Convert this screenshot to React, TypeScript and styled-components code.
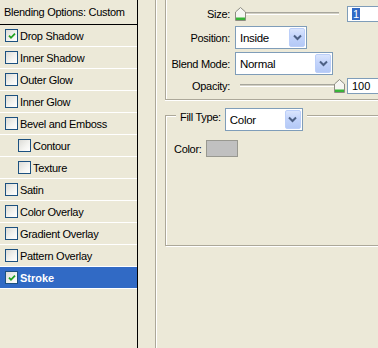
import React from "react";
import styled, { createGlobalStyle } from "styled-components";

const GlobalStyle = createGlobalStyle`
  html, body {
    margin: 0;
    padding: 0;
    overflow: hidden;
    background: #ece9d8;
  }
  body {
    font-family: "Liberation Sans", Arial, sans-serif;
    font-size: 11px;
    color: #000;
  }
`;

const Window = styled.div`
  display: flex;
  width: 378px;
  height: 348px;
  overflow: hidden;
  background: #ece9d8;
  letter-spacing: -0.3px;
`;

const StyleList = styled.div`
  width: 137px;
  flex-shrink: 0;
  border-right: 1px solid #000;
  display: flex;
  flex-direction: column;
`;

const ListHeader = styled.div`
  height: 24px;
  border-bottom: 1px solid #000;
  padding-left: 4px;
  display: flex;
  align-items: center;
`;

const ListRow = styled.div<{ $indent?: boolean; $selected?: boolean }>`
  height: 21px;
  border-bottom: 1px solid #fff;
  display: flex;
  align-items: center;
  gap: 2px;
  padding-left: ${(p) => (p.$indent ? 18 : 5)}px;
  background: ${(p) => (p.$selected ? "#316ac5" : "transparent")};
  color: ${(p) => (p.$selected ? "#fff" : "#000")};
  font-weight: ${(p) => (p.$selected ? "bold" : "normal")};
  letter-spacing: ${(p) => (p.$selected ? "0" : "-0.3px")};
`;

const CheckBox = styled.span`
  width: 13px;
  height: 13px;
  box-sizing: border-box;
  flex-shrink: 0;
  border: 1px solid #1c5180;
  background: linear-gradient(135deg, #dcdcd7 0%, #f4f4f1 60%, #fff 100%);
  display: flex;
  align-items: center;
  justify-content: center;
`;

const Divider = styled.div`
  width: 17px;
  flex-shrink: 0;
  border-right: 1px solid #aca899;
  box-shadow: 1px 0 0 #fff;
`;

const Content = styled.div`
  flex: 1;
  min-width: 0;
  overflow: hidden;
  padding-left: 9px;
  display: flex;
  flex-direction: column;
`;

const StructureBox = styled.div`
  box-sizing: border-box;
  height: 100px;
  margin-right: -4px;
  border-left: 1px solid #aca899;
  border-bottom: 1px solid #aca899;
  box-shadow: inset 1px 0 0 #fff, 0 1px 0 #fff;
  padding-top: 5px;
  display: grid;
  grid-template-columns: 64px 1fr;
  grid-template-rows: 18px 23px 23px 16px;
  column-gap: 5px;
  row-gap: 3px;
`;

const FieldLabel = styled.div`
  display: flex;
  align-items: center;
  justify-content: flex-end;
  white-space: nowrap;
`;

const ControlCell = styled.div`
  display: flex;
  align-items: center;
  min-width: 0;
`;

const SliderWrap = styled.div`
  position: relative;
  width: 110px;
  height: 14px;
  flex-shrink: 0;
`;

const SliderTrack = styled.div`
  position: absolute;
  left: 5px;
  right: 6px;
  top: 5px;
  height: 3px;
  box-sizing: border-box;
  border-top: 1px solid #a7a69c;
  border-bottom: 1px solid #fff;
  background: #d2d0c4;
`;

const SliderThumb = styled.svg`
  position: absolute;
  top: 0;
  width: 11px;
  height: 14px;
`;

const NumberBox = styled.div`
  box-sizing: border-box;
  width: 40px;
  flex-shrink: 0;
  height: 16px;
  margin-left: 2px;
  border: 1px solid #7f9db9;
  background: #fff;
  display: flex;
  align-items: center;
  padding-left: 4px;
  letter-spacing: 0;
`;

const Selected = styled.span`
  background: #316ac5;
  color: #fff;
  padding: 0 1px;
  line-height: 12px;
`;

const SelectBox = styled.div<{ $width: number }>`
  box-sizing: border-box;
  width: ${(p) => p.$width}px;
  flex-shrink: 0;
  height: 23px;
  border: 1px solid #7f9db9;
  background: #fff;
  display: flex;
  align-items: center;
  padding: 1px;
`;

const SelectValue = styled.span`
  flex: 1;
  padding-left: 3px;
  font-size: 11.5px;
`;

const SelectButton = styled.span`
  box-sizing: border-box;
  width: 16px;
  height: 19px;
  border: 1px solid #bccff9;
  border-radius: 2px;
  background: linear-gradient(180deg, #dae5fd 0%, #c3d4fb 45%, #b4c9f6 100%);
  display: flex;
  align-items: center;
  justify-content: center;
`;

const FillBox = styled.div`
  box-sizing: border-box;
  margin-top: 15px;
  margin-right: -4px;
  height: 131px;
  border: 1px solid #aca899;
  box-shadow: inset 1px 1px 0 #fff, 1px 1px 0 #fff;
  display: flex;
  flex-direction: column;
`;

const FillHeader = styled.div`
  margin-top: -8px;
  margin-left: 10px;
  display: flex;
  align-items: flex-start;
`;

const HeaderLabel = styled.span`
  background: #ece9d8;
  padding: 3px 4px 0 4px;
  line-height: 13px;
`;

const HeaderControl = styled.span`
  background: #ece9d8;
  padding-right: 4px;
`;

const ColorRow = styled.div`
  margin-top: 9px;
  padding-left: 8px;
  display: flex;
  align-items: center;
  gap: 4px;
`;

const Swatch = styled.span`
  box-sizing: border-box;
  width: 32px;
  height: 17px;
  background: #c0c0c0;
  border: 1px solid #989890;
`;

const CheckMark = () => (
  <svg width="8" height="8" viewBox="0 0 8 8">
    <path d="M1 3.6 L3 5.8 L7 1.6" fill="none" stroke="#21a121" strokeWidth="1.8" />
  </svg>
);

const Chevron = () => (
  <svg width="9" height="7" viewBox="0 0 9 7">
    <path d="M1 1.5 L4.5 5 L8 1.5" fill="none" stroke="#4d6185" strokeWidth="2" />
  </svg>
);

const Slider = ({ value }: { value: number }) => (
  <SliderWrap>
    <SliderTrack />
    <SliderThumb viewBox="0 0 11 14" style={{ left: `${(value / 100) * 99}px` }}>
      <path d="M0.5 5 L5.5 0.5 L10.5 5 V13.5 H0.5 Z" fill="#f6f6f2" stroke="#8d8c82" />
      <rect x="1" y="10.5" width="9" height="2.5" fill="#37b437" />
    </SliderThumb>
  </SliderWrap>
);

const Select = ({ value, width }: { value: string; width: number }) => (
  <SelectBox $width={width}>
    <SelectValue>{value}</SelectValue>
    <SelectButton>
      <Chevron />
    </SelectButton>
  </SelectBox>
);

const effects = [
  { name: "Drop Shadow", checked: true },
  { name: "Inner Shadow" },
  { name: "Outer Glow" },
  { name: "Inner Glow" },
  { name: "Bevel and Emboss" },
  { name: "Contour", indent: true },
  { name: "Texture", indent: true },
  { name: "Satin" },
  { name: "Color Overlay" },
  { name: "Gradient Overlay" },
  { name: "Pattern Overlay" },
  { name: "Stroke", checked: true, selected: true },
];

export default function App() {
  return (
    <>
      <GlobalStyle />
      <Window>
        <StyleList>
          <ListHeader>Blending Options: Custom</ListHeader>
          {effects.map((fx) => (
            <ListRow key={fx.name} $indent={fx.indent} $selected={fx.selected}>
              <CheckBox>{fx.checked && <CheckMark />}</CheckBox>
              {fx.name}
            </ListRow>
          ))}
        </StyleList>
        <Divider />
        <Content>
          <StructureBox>
            <FieldLabel>Size:</FieldLabel>
            <ControlCell>
              <Slider value={0} />
              <NumberBox>
                <Selected>1</Selected>
              </NumberBox>
            </ControlCell>
            <FieldLabel>Position:</FieldLabel>
            <ControlCell>
              <Select value="Inside" width={72} />
            </ControlCell>
            <FieldLabel>Blend Mode:</FieldLabel>
            <ControlCell>
              <Select value="Normal" width={98} />
            </ControlCell>
            <FieldLabel>Opacity:</FieldLabel>
            <ControlCell>
              <Slider value={100} />
              <NumberBox>100</NumberBox>
            </ControlCell>
          </StructureBox>
          <FillBox>
            <FillHeader>
              <HeaderLabel>Fill Type:</HeaderLabel>
              <HeaderControl>
                <Select value="Color" width={78} />
              </HeaderControl>
            </FillHeader>
            <ColorRow>
              Color:
              <Swatch />
            </ColorRow>
          </FillBox>
        </Content>
      </Window>
    </>
  );
}
